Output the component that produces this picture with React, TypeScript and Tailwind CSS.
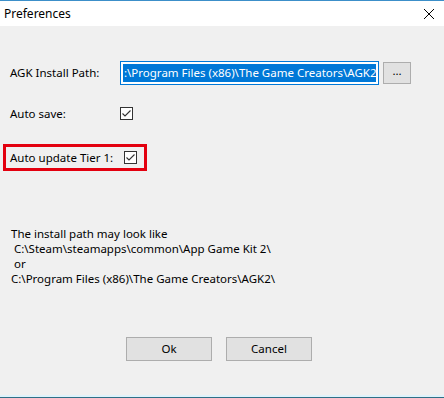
import { ReactNode } from 'react';

const font = { fontFamily: '"Noto Sans", "Open Sans", Arial, sans-serif' };

function CheckBox() {
  return (
    <div className="w-[13px] h-[13px] border border-[#333333] bg-white flex items-center justify-center">
      <svg width="11" height="11" viewBox="0 0 11 11">
        <path d="M1.5 5.5 L4 8 L9.5 2.5" fill="none" stroke="#333333" strokeWidth="1.1" />
      </svg>
    </div>
  );
}

function WinButton({ children, className }: { children: ReactNode; className?: string }) {
  return (
    <div
      className={`flex items-center justify-center bg-[#e1e1e1] border border-[#adadad] text-black ${className ?? ''}`}
    >
      {children}
    </div>
  );
}

export default function App() {
  return (
    <div className="w-[444px] h-[398px] flex flex-col bg-[#f0f0f0] text-[11.5px] text-black overflow-hidden" style={font}>
      {/* title bar */}
      <div className="h-[26px] bg-white border-t border-[#3c8fc9] flex items-center justify-between pl-[4px] pr-[9px]">
        <span className="leading-none text-[12px]">Preferences</span>
        <svg width="12" height="12" viewBox="0 0 12 12">
          <path d="M1 1 L11 11 M11 1 L1 11" stroke="#000" strokeWidth="1" />
        </svg>
      </div>

      <div className="flex-1 flex flex-col">
        {/* install path */}
        <div className="mt-[35px] flex items-center h-[24px] pl-[10px]">
          <span className="w-[110px] leading-none">AGK Install Path:</span>
          <div className="w-[259px] h-[24px] border border-[#0078d7] bg-white p-[2px] flex overflow-hidden">
            <div className="flex-1 bg-[#0078d7] text-white whitespace-nowrap flex items-center pl-[1px] h-full">
              :\Program Files (x86)\The Game Creators\AGK2
            </div>
          </div>
          <WinButton className="ml-[4px] w-[28px] h-[22px] pb-[4px]">...</WinButton>
        </div>

        {/* auto save */}
        <div className="mt-[22px] flex items-center h-[13px] pl-[10px]">
          <span className="w-[110px] leading-none">Auto save:</span>
          <CheckBox />
        </div>

        {/* auto update, highlighted */}
        <div className="mt-[24px] ml-[3px] w-[144px] h-[27px] border-[3px] border-[#e3000f] flex items-center pl-[4px]">
          <span className="w-[114px] leading-none">Auto update Tier 1:</span>
          <CheckBox />
        </div>

        {/* hint */}
        <div className="mt-[55px] pl-[11px] leading-[15px] whitespace-pre">
          <div>The install path may look like</div>
          <div> C:\Steam\steamapps\common\App Game Kit 2\</div>
          <div> or</div>
          <div>C:\Program Files (x86)\The Game Creators\AGK2\</div>
        </div>

        {/* buttons */}
        <div className="mt-[51px] flex gap-[14px] pl-[126px]">
          <WinButton className="w-[86px] h-[24px]">Ok</WinButton>
          <WinButton className="w-[86px] h-[24px]">Cancel</WinButton>
        </div>
      </div>

      <div className="h-[2px] bg-[#dff3fb]" />
      <div className="h-[1px] bg-[#2e6f86]" />
    </div>
  );
}
